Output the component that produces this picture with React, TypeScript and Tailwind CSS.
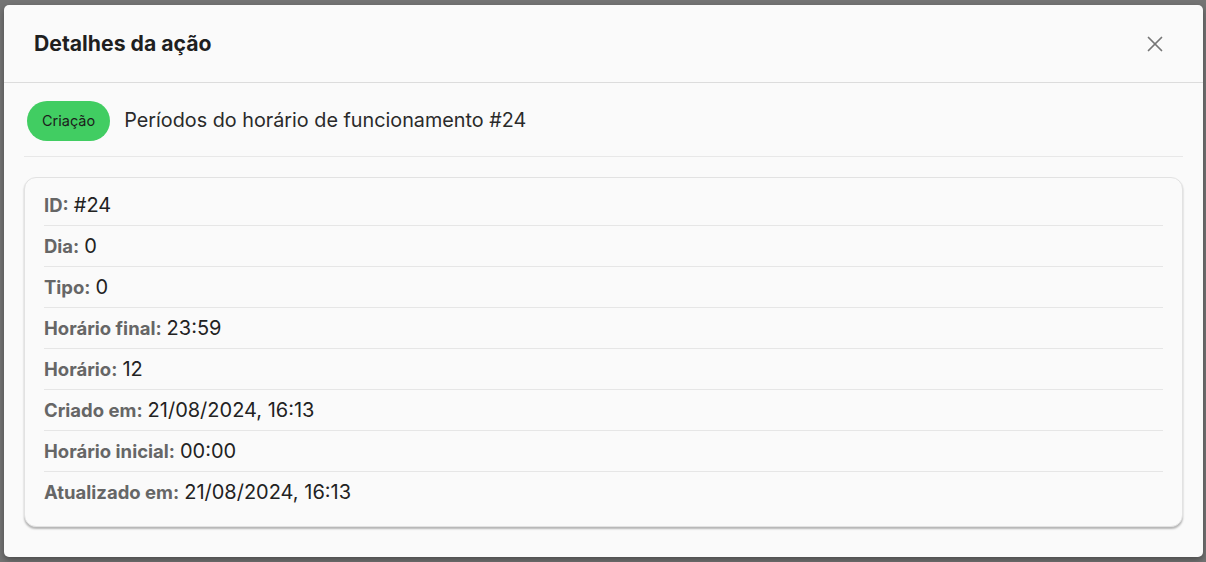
import { X } from "lucide-react";

const rows: { label: string; value: string }[] = [
  { label: "ID:", value: "#24" },
  { label: "Dia:", value: "0" },
  { label: "Tipo:", value: "0" },
  { label: "Horário final:", value: "23:59" },
  { label: "Horário:", value: "12" },
  { label: "Criado em:", value: "21/08/2024, 16:13" },
  { label: "Horário inicial:", value: "00:00" },
  { label: "Atualizado em:", value: "21/08/2024, 16:13" },
];

export default function App() {
  return (
    <div
      className="h-[562px] w-[1206px] overflow-hidden bg-[#747474] pt-[5px] pl-[4px] pr-[3px]"
      style={{ fontFamily: "Inter, 'Noto Sans', sans-serif" }}
    >
      <div className="h-[552px] rounded-[5px] bg-[#fafafa] shadow-[0_3px_6px_rgba(0,0,0,0.35)]">
        {/* header */}
        <div className="flex h-[78px] items-center justify-between border-b border-[#dcdcdc] pl-[30px] pr-[35px]">
          <h2 className="text-[21.2px] font-bold text-[#1f1f1f]">Detalhes da ação</h2>
          <X className="h-[26px] w-[26px] text-[#767676]" strokeWidth={1.6} aria-hidden="true" />
        </div>

        {/* body */}
        <div className="px-5">
          <div className="flex items-center gap-[14px] border-b border-[#e8e8e8] pl-[3px] pt-[18px] pb-[15px]">
            <span className="inline-flex h-[40px] items-center rounded-full bg-[#41cd62] px-[15px] text-[14.5px] text-[#1c1c1c]">
              Criação
            </span>
            <span className="text-[19.8px] text-[#2a2a2a]">Períodos do horário de funcionamento #24</span>
          </div>

          <div className="mt-5 rounded-[12px] border border-[#e2e2e2] bg-[#fafafa] px-[19px] pt-[7px] pb-[13px] shadow-[0_2px_2px_rgba(0,0,0,0.28)]">
            {rows.map((r, i) => (
              <div
                key={r.label}
                className={`flex h-[41px] items-baseline pt-[8px] ${i < rows.length - 1 ? "border-b border-[#e6e6e6]" : ""}`}
              >
                <span className="text-[18.5px] leading-[24px] font-bold text-[#666666]">{r.label}</span>
                <span className="ml-[5px] text-[20px] leading-[24px] text-[#222222]">{r.value}</span>
              </div>
            ))}
          </div>
        </div>
      </div>
    </div>
  );
}
